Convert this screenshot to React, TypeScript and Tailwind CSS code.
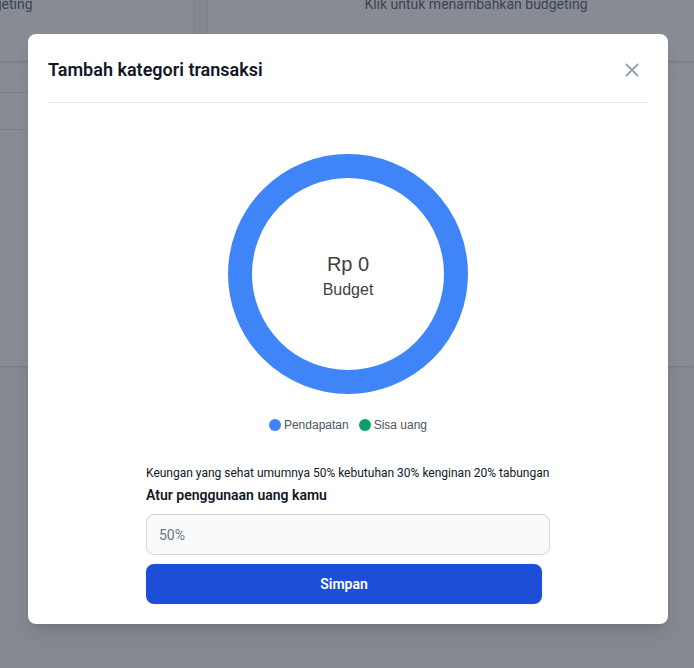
import { useState } from 'react'

function CloseIcon() {
  return (
    <svg width="14" height="14" viewBox="0 0 14 14" fill="none">
      <path d="M1.5 1.5l11 11M12.5 1.5l-11 11" stroke="#9ca3af" strokeWidth="2" strokeLinecap="round" />
    </svg>
  )
}

function Doughnut() {
  return (
    <div className="relative w-[240px] h-[240px]">
      <svg width="240" height="240" viewBox="0 0 240 240">
        <circle cx="120" cy="120" r="108" fill="none" stroke="#4085f7" strokeWidth="24" />
      </svg>
      <div className="absolute inset-0 flex flex-col items-center justify-center pt-[4px] font-['Liberation_Sans',Arial,sans-serif] text-[#3f3f46]">
        <span className="text-[20px] leading-6">Rp 0</span>
        <span className="text-[16px] leading-5 mt-[4px]">Budget</span>
      </div>
    </div>
  )
}

export default function App() {
  const [value, setValue] = useState('')

  return (
    <div className="relative w-[694px] h-[668px] overflow-hidden bg-gray-50 font-['Roboto',sans-serif]">
      {/* Page behind the dialog */}
      <div className="flex gap-[15px] mt-[-20px] ml-[-359px]">
        <div className="w-[552px] h-[81px] shrink-0 bg-white shadow-sm flex justify-center pt-[14px] pl-[8px]">
          <span className="text-sm leading-5 text-gray-500">Klik untuk menambahkan budgeting</span>
        </div>
        <div className="w-[536px] h-[81px] shrink-0 bg-white shadow-sm flex justify-center pt-[14px]">
          <span className="text-sm leading-5 text-gray-500">Klik untuk menambahkan budgeting</span>
        </div>
      </div>
      <div className="mt-px h-[304px] bg-white shadow-sm flex flex-col">
        <div className="h-[14px] border-b border-gray-100" />
        <div className="h-[17px] border-b border-gray-200 w-[190px]" />
        <div className="h-[37px] border-b border-gray-200 w-[190px]" />
      </div>

      {/* Overlay */}
      <div className="absolute inset-0 bg-gray-900/50" />

      {/* Dialog */}
      <div className="absolute left-[28px] top-[34px] w-[640px] bg-white rounded-lg shadow-lg">
        <div className="mx-5 pt-[22px] pb-[18px] border-b border-gray-200 flex items-center justify-between">
          <h3 className="text-lg leading-7 font-semibold text-gray-900">Tambah kategori transaksi</h3>
          <button className="w-7 h-7 flex items-center justify-center mr-[2px]">
            <CloseIcon />
          </button>
        </div>

        <div className="flex flex-col items-center pt-[51px] pb-5">
          <Doughnut />

          <div className="mt-[23px] flex items-center gap-[10px] font-['Liberation_Sans',Arial,sans-serif] text-[12px] leading-4 text-[#4b5563]">
            <div className="flex items-center gap-[3px]">
              <span className="w-3 h-3 rounded-full bg-[#4085f7]" />
              <span>Pendapatan</span>
            </div>
            <div className="flex items-center gap-[3px]">
              <span className="w-3 h-3 rounded-full bg-[#0e9f6e]" />
              <span>Sisa uang</span>
            </div>
          </div>

          <div className="w-[404px] mt-[32px]">
            <p className="text-xs leading-4 text-gray-900">
              Keungan yang sehat umumnya 50% kebutuhan 30% kenginan 20% tabungan
            </p>
            <label className="block mt-1 text-sm leading-5 font-semibold text-gray-900">Atur penggunaan uang kamu</label>
            <input
              value={value}
              onChange={(e) => setValue(e.target.value)}
              placeholder="50%"
              className="mt-[9px] w-full h-[41px] px-3 rounded-lg border border-gray-300 bg-gray-50 text-sm text-gray-900 placeholder:text-gray-500 outline-none"
            />
            <button className="mt-[9px] w-[396px] h-10 rounded-lg bg-[#1d4ed8] text-white text-sm font-semibold">
              Simpan
            </button>
          </div>
        </div>
      </div>
    </div>
  )
}
